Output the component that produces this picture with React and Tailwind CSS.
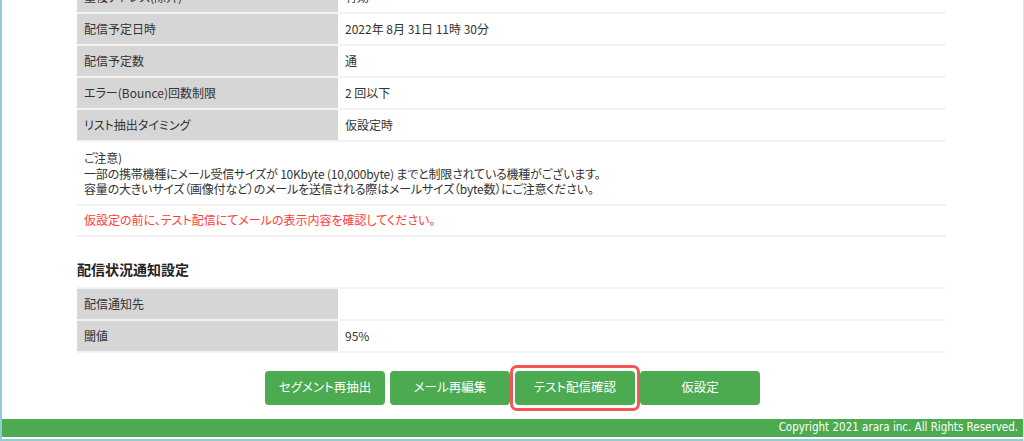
import React from "react";

const jp = { fontFamily: '"Noto Sans CJK JP", "Noto Sans", sans-serif' };

function Row({ label, value }) {
  return (
    <div className="flex h-[32px] border-b-2 border-[#f2f2f2]">
      <div className="w-[261px] bg-[#d6d6d6] pl-[7px] flex items-center text-[12px] text-[#333]">{label}</div>
      <div className="w-[2px] bg-white" />
      <div className="flex-1 pl-[5px] flex items-center text-[12px] text-[#333]">{value}</div>
    </div>
  );
}

function Btn({ children, highlight }) {
  return (
    <div className="relative">
      {highlight && (
        <div className="absolute -left-[5px] -right-[5px] -top-[6px] -bottom-[6px] rounded-[7px] border-[3px] border-[#f25656]" />
      )}
      <button
        className={`h-[34px] w-[120px] rounded-[4px] bg-[#4caa50] text-white text-[12.5px] flex items-center justify-center ${
          highlight ? "ring-2 ring-white" : ""
        }`}
      >
        {children}
      </button>
    </div>
  );
}

export default function App() {
  return (
    <div
      className="h-[441px] w-[1024px] overflow-hidden bg-white border-l-2 border-[#8ecdd2] border-r border-r-[#e4e4e4] flex flex-col [font-feature-settings:'palt']"
      style={jp}
    >
      <div className="pl-[75px] w-[944px] -mt-[18px]">
        <div className="flex flex-col">
          <Row label="重複アドレス(除外)" value="有効" />
          <Row label="配信予定日時" value="2022年 8月 31日 11時 30分" />
          <Row label="配信予定数" value="通" />
          <Row label="エラー(Bounce)回数制限" value="2 回以下" />
          <Row label="リスト抽出タイミング" value="仮設定時" />
        </div>
        <div className="pl-[7px] pt-[8px] pb-[7px] text-[12px] leading-[15.5px] text-[#333] border-b-2 border-[#f0f0f0] tracking-[-0.2px]">
          <p>ご注意)</p>
          <p>一部の携帯機種にメール受信サイズが 10Kbyte (10,000byte) までと制限されている機種がございます。</p>
          <p>容量の大きいサイズ（画像付など）のメールを送信される際はメールサイズ（byte数）にご注意ください。</p>
        </div>
        <div className="h-[31px] pl-[7px] flex items-center text-[12px] text-[#ff3b3b] border-b-2 border-[#f0f0f0]">
          仮設定の前に、テスト配信にてメールの表示内容を確認してください。
        </div>
        <h2 className="mt-[22px] text-[14px] font-bold text-[#222] leading-[20px]">配信状況通知設定</h2>
        <div className="mt-[8px] border-t-2 border-[#f2f2f2] flex flex-col">
          <Row label="配信通知先" value="" />
          <Row label="閾値" value="95%" />
        </div>
      </div>
      <div className="mt-[18px] flex justify-center gap-[5px]">
        <Btn>セグメント再抽出</Btn>
        <Btn>メール再編集</Btn>
        <Btn highlight>テスト配信確認</Btn>
        <Btn>仮設定</Btn>
      </div>
      <div className="mt-auto mb-[2px] h-[18px] bg-[#4caa50] flex items-center justify-end pr-[5px]">
        <span
          className="text-white text-[11.5px]"
          style={{ fontFamily: '"DejaVu Sans Condensed", "Liberation Sans", sans-serif' }}
        >
          Copyright 2021 arara inc. All Rights Reserved.
        </span>
      </div>
      <div className="h-[2px] bg-[#8ecdd2]" />
    </div>
  );
}
